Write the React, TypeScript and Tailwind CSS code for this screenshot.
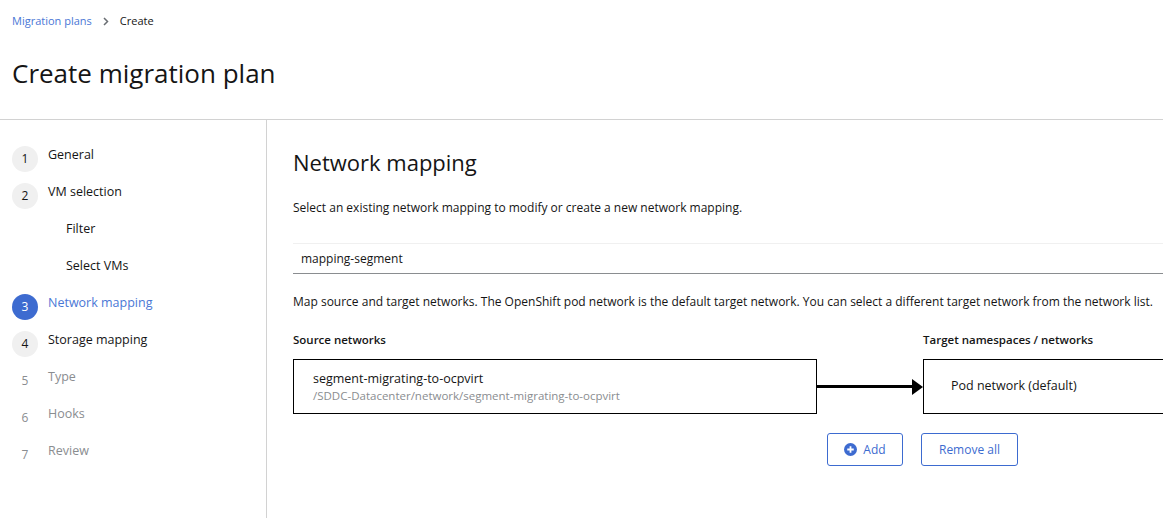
import React from "react"

type Step = {
	num?: number
	label: string
	state: "done" | "current" | "sub" | "disabled"
}

const steps: Step[] = [
	{ num: 1, label: "General", state: "done" },
	{ num: 2, label: "VM selection", state: "done" },
	{ label: "Filter", state: "sub" },
	{ label: "Select VMs", state: "sub" },
	{ num: 3, label: "Network mapping", state: "current" },
	{ num: 4, label: "Storage mapping", state: "done" },
	{ num: 5, label: "Type", state: "disabled" },
	{ num: 6, label: "Hooks", state: "disabled" },
	{ num: 7, label: "Review", state: "disabled" },
]

const StepRow = ({ step }: { step: Step }) => {
	if (step.state === "sub") {
		return (
			<div className="flex h-[37px] items-start pl-[66px] text-[12.5px] text-[#151515]">
				{step.label}
			</div>
		)
	}
	const circle =
		step.state === "current"
			? "bg-[#3d6bd0] text-white"
			: step.state === "done"
				? "bg-[#f0f0f0] text-[#151515]"
				: "bg-transparent text-[#8a8d90]"
	const text =
		step.state === "current"
			? "text-[#4a77d6]"
			: step.state === "disabled"
				? "text-[#8a8d90]"
				: "text-[#151515]"
	return (
		<div className="flex h-[37px] items-start pl-3">
			<div className={`flex h-[26px] w-[26px] shrink-0 items-center justify-center rounded-full text-[12px] ${circle}`}>
				{step.num}
			</div>
			<span className={`ml-[10px] text-[12.5px] ${text}`}>{step.label}</span>
		</div>
	)
}

const App = (): JSX.Element => {
	return (
		<div className="h-[518px] w-[1163px] overflow-hidden bg-white font-['Open_Sans',sans-serif] text-[#151515]">
			<div className="flex h-[120px] flex-col border-b border-[#d2d2d2] px-3">
				<div className="flex items-center pt-[13px] text-[11px]">
					<span className="text-[#4a77d6]">Migration plans</span>
					<svg className="mx-[11px]" width="6" height="9" viewBox="0 0 6 9">
						<path d="M1 1l3.5 3.5L1 8" fill="none" stroke="#6a6e73" strokeWidth="1.5" />
					</svg>
					<span>Create</span>
				</div>
				<h1 className="mt-[25px] text-[26px] leading-[36px]">Create migration plan</h1>
			</div>
			<div className="flex h-[398px]">
				<div className="w-[267px] shrink-0 border-r border-[#d2d2d2] pt-[26px]">
					{steps.map((s) => (
						<StepRow key={s.label} step={s} />
					))}
				</div>
				<div className="min-w-0 flex-1 pl-[26px] pt-[28px]">
					<h2 className="text-[22px] leading-[28px]">Network mapping</h2>
					<p className="mt-[23px] text-[12px] leading-[18px]">
						Select an existing network mapping to modify or create a new network mapping.
					</p>
					<div className="mt-[26px] flex h-[31px] w-[900px] items-center border-t border-b border-t-[#f0f0f0] border-b-[#8a8d90] px-2 text-[12px]">
						mapping-segment
					</div>
					<p className="mt-[19px] whitespace-nowrap text-[12px] leading-[18px]">
						Map source and target networks. The OpenShift pod network is the default target network. You can select a different target network from the network list.
					</p>
					<div className="mt-[20px] flex text-[11.5px] font-semibold leading-[18px]">
						<div className="w-[630px] shrink-0">Source networks</div>
						<div>Target namespaces / networks</div>
					</div>
					<div className="mt-[10px] flex items-center">
						<div className="flex h-[55px] w-[524px] shrink-0 flex-col justify-center border border-black pl-[19px]">
							<div className="text-[12.5px] leading-[18px]">segment-migrating-to-ocpvirt</div>
							<div className="text-[11.5px] leading-[16px] text-[#8a8d90]">
								/SDDC-Datacenter/network/segment-migrating-to-ocpvirt
							</div>
						</div>
						<div className="flex w-[106px] shrink-0 items-center">
							<div className="h-[3px] w-[95px] bg-black" />
							<div className="h-0 w-0 border-y-[8px] border-l-[11px] border-y-transparent border-l-black" />
						</div>
						<div className="flex h-[55px] w-[300px] shrink-0 items-center border border-black pl-[27px] text-[12.5px]">
							Pod network (default)
						</div>
					</div>
					<div className="mt-[19px] flex gap-[18px] pl-[534px]">
						<button className="flex h-[33px] w-[76px] items-center justify-center gap-[6px] rounded-[3px] border border-[#3d6bd0] text-[12px] text-[#3d6bd0]">
							<svg width="13" height="13" viewBox="0 0 16 16">
								<circle cx="8" cy="8" r="8" fill="#3d6bd0" />
								<path d="M8 4v8M4 8h8" stroke="white" strokeWidth="2.2" />
							</svg>
							Add
						</button>
						<button className="flex h-[33px] w-[97px] items-center justify-center rounded-[3px] border border-[#3d6bd0] text-[12px] text-[#3d6bd0]">
							Remove all
						</button>
					</div>
				</div>
			</div>
		</div>
	)
}

export default App
